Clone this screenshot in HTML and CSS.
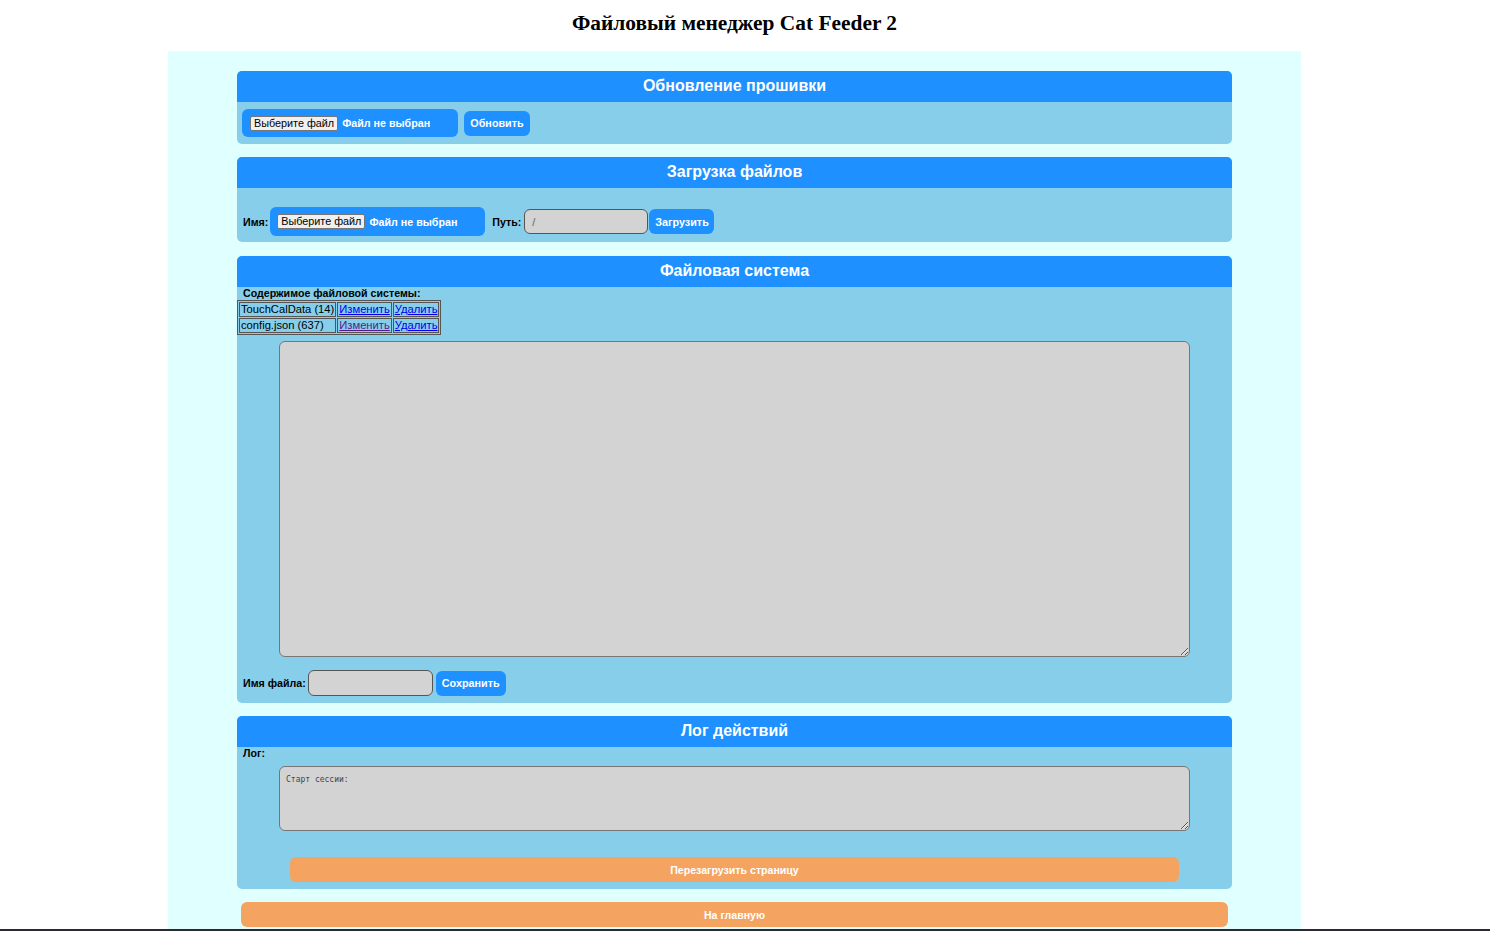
FILE: index.html
```html
<!DOCTYPE html>
<html lang="ru">
<head>
<meta charset="utf-8">
<title>Файловый менеджер Cat Feeder 2</title>
<link rel="stylesheet" href="styles.css">
</head>
<body>
<div class="page">
  <h1 class="title">Файловый менеджер Cat Feeder 2</h1>
  <div class="container">

    <section class="card">
      <h2 class="card-head">Обновление прошивки</h2>
      <div class="card-body body-fw">
        <div class="row">
          <label class="file file-fw"><span class="file-btn">Выберите файл</span><span class="file-text">Файл не выбран</span></label>
          <button class="btn btn-fw">Обновить</button>
        </div>
      </div>
    </section>

    <section class="card">
      <h2 class="card-head">Загрузка файлов</h2>
      <div class="card-body body-up">
        <div class="row">
          <span class="lbl lbl-name">Имя:</span>
          <label class="file file-up"><span class="file-btn">Выберите файл</span><span class="file-text">Файл не выбран</span></label>
          <span class="lbl lbl-path">Путь:</span>
          <input class="text-input input-path" type="text" placeholder="/">
          <button class="btn btn-up">Загрузить</button>
        </div>
      </div>
    </section>

    <section class="card card-fs">
      <h2 class="card-head">Файловая система</h2>
      <div class="card-body body-fs">
        <div class="lbl lbl-line">Содержимое файловой системы:</div>
        <table class="fs-table">
          <tr><td>TouchCalData (14)</td><td><a href="#edit1">Изменить</a></td><td><a href="#del1">Удалить</a></td></tr>
          <tr><td>config.json (637)</td><td><a class="visited" href="#edit2">Изменить</a></td><td><a href="#del2">Удалить</a></td></tr>
        </table>
        <div class="ta-wrap"><textarea class="ta ta-edit"></textarea></div>
        <div class="row row-save">
          <span class="lbl">Имя файла:</span>
          <input class="text-input input-name" type="text">
          <button class="btn btn-save">Сохранить</button>
        </div>
      </div>
    </section>

    <section class="card">
      <h2 class="card-head">Лог действий</h2>
      <div class="card-body body-log">
        <div class="lbl lbl-line">Лог:</div>
        <div class="ta-wrap ta-wrap-log"><textarea class="ta ta-log">Старт сессии:</textarea></div>
        <button class="orange orange-reload">Перезагрузить страницу</button>
      </div>
    </section>

    <button class="orange orange-home">На главную</button>
  </div>
</div>
<div class="edge"></div>
</body>
</html>
```

FILE: styles.css
```css
html, body {
  margin: 0;
  padding: 0;
  background: #ffffff;
  overflow: hidden;
}
body {
  font-family: "Liberation Sans", Arial, sans-serif;
  padding-right: 21px;
}
.page {
  width: 1469px;
}
.title {
  margin: 0;
  height: 51px;
  line-height: 46px;
  text-align: center;
  font-family: "Liberation Serif", "Times New Roman", serif;
  font-size: 21.4px;
  font-weight: bold;
  color: #000;
}
.container {
  width: 1133px;
  margin: 0 auto;
  background: #e0ffff;
  padding: 20px 0 30px;
  display: flex;
  flex-direction: column;
  align-items: center;
  gap: 13px;
}
.card {
  width: 995px;
  background: #87ceeb;
  border-radius: 5px;
}
.card-fs { margin-top: 1px; }
.card-head {
  margin: 0;
  height: 31px;
  line-height: 30px;
  background: #1e90ff;
  color: #fff;
  text-align: center;
  font-size: 16px;
  font-weight: bold;
  border-radius: 5px 5px 0 0;
}
.card-body {
  padding: 0 5px;
}
.body-fw { padding-top: 7px; padding-bottom: 7px; }
.body-up { padding-top: 19px; padding-bottom: 6px; }
.body-fs { padding-left: 0; padding-right: 0; padding-bottom: 7px; }
.body-log { padding-left: 0; padding-right: 0; padding-bottom: 7px; display: flex; flex-direction: column; }

.row {
  display: flex;
  align-items: center;
}
.lbl {
  font-size: 10.65px;
  font-weight: bold;
  color: #000;
}
.row .lbl:first-child { margin-left: 1px; margin-right: 2px; }
.row .lbl-name { margin-right: 3px; }
.lbl-path { margin-left: 7px; margin-right: 3px; }
.lbl-line {
  line-height: 13px;
  padding-left: 6px;
}

.file {
  display: flex;
  align-items: center;
  box-sizing: border-box;
  height: 28px;
  background: #1e90ff;
  border-radius: 6px;
  padding-left: 8px;
}
.file-fw { width: 216px; }
.file-up { width: 215px; height: 29px; padding-left: 7px; }
.file-btn {
  box-sizing: border-box;
  height: 15px;
  line-height: 13px;
  padding: 0 3px;
  background: #f0f0f0;
  border: 1px solid #767676;
  border-radius: 2px;
  font-size: 10.8px;
  color: #000;
}
.file-text {
  margin-left: 4px;
  color: #fff;
  font-size: 10.7px;
  font-weight: bold;
}

.btn {
  height: 25px;
  border: none;
  border-radius: 6px;
  background: #1e90ff;
  color: #fff;
  font-family: "Liberation Sans", Arial, sans-serif;
  font-size: 10.8px;
  font-weight: bold;
  padding: 0 6px;
  cursor: pointer;
}
.btn-fw { width: 66px; margin-left: 6px; }
.btn-up { width: 65px; margin-left: 1px; }
.btn-save { width: 70px; margin-left: 3px; }

.text-input {
  box-sizing: border-box;
  height: 25px;
  background: #d3d3d3;
  border: 1px solid #555;
  border-radius: 6px;
  padding: 0 7px;
  font-family: "Liberation Sans", Arial, sans-serif;
  font-size: 11px;
  outline: none;
}
.text-input::placeholder { color: #666; }
.input-path { width: 124px; }
.input-name { width: 125px; height: 26px; }

.fs-table {
  border: 1px solid #555;
  border-spacing: 1px;
  font-size: 11.2px;
}
.fs-table td {
  border: 1px solid #555;
  padding: 0 1px 1px;
  line-height: 12px;
}
.fs-table a { color: #0000ee; }
.fs-table a.visited { color: #551a8b; }

.ta-wrap {
  display: flex;
  justify-content: center;
  padding-top: 6px;
}
.ta {
  box-sizing: border-box;
  width: 911px;
  background: #d3d3d3;
  border: 1px solid #767676;
  border-radius: 6px;
  font-family: "DejaVu Sans Mono", monospace;
  font-size: 8px;
  color: #444;
  padding: 8px 6px;
  display: block;
  outline: none;
}
.ta-edit { height: 316px; }
.ta-wrap-log { padding-top: 6px; }
.ta-log { height: 65px; }

.row-save {
  margin-top: 13px;
  padding-left: 5px;
}

.orange {
  height: 25px;
  border: none;
  border-radius: 6px;
  background: #f4a460;
  color: #fff;
  font-family: "Liberation Sans", Arial, sans-serif;
  font-size: 10.6px;
  font-weight: bold;
  cursor: pointer;
}
.orange-reload {
  width: 889px;
  align-self: center;
  margin-top: 26px;
}
.orange-home { width: 987px; }

.edge {
  position: fixed;
  left: 0;
  right: 0;
  bottom: 0;
  height: 2px;
  background: #2b2a33;
}
```
